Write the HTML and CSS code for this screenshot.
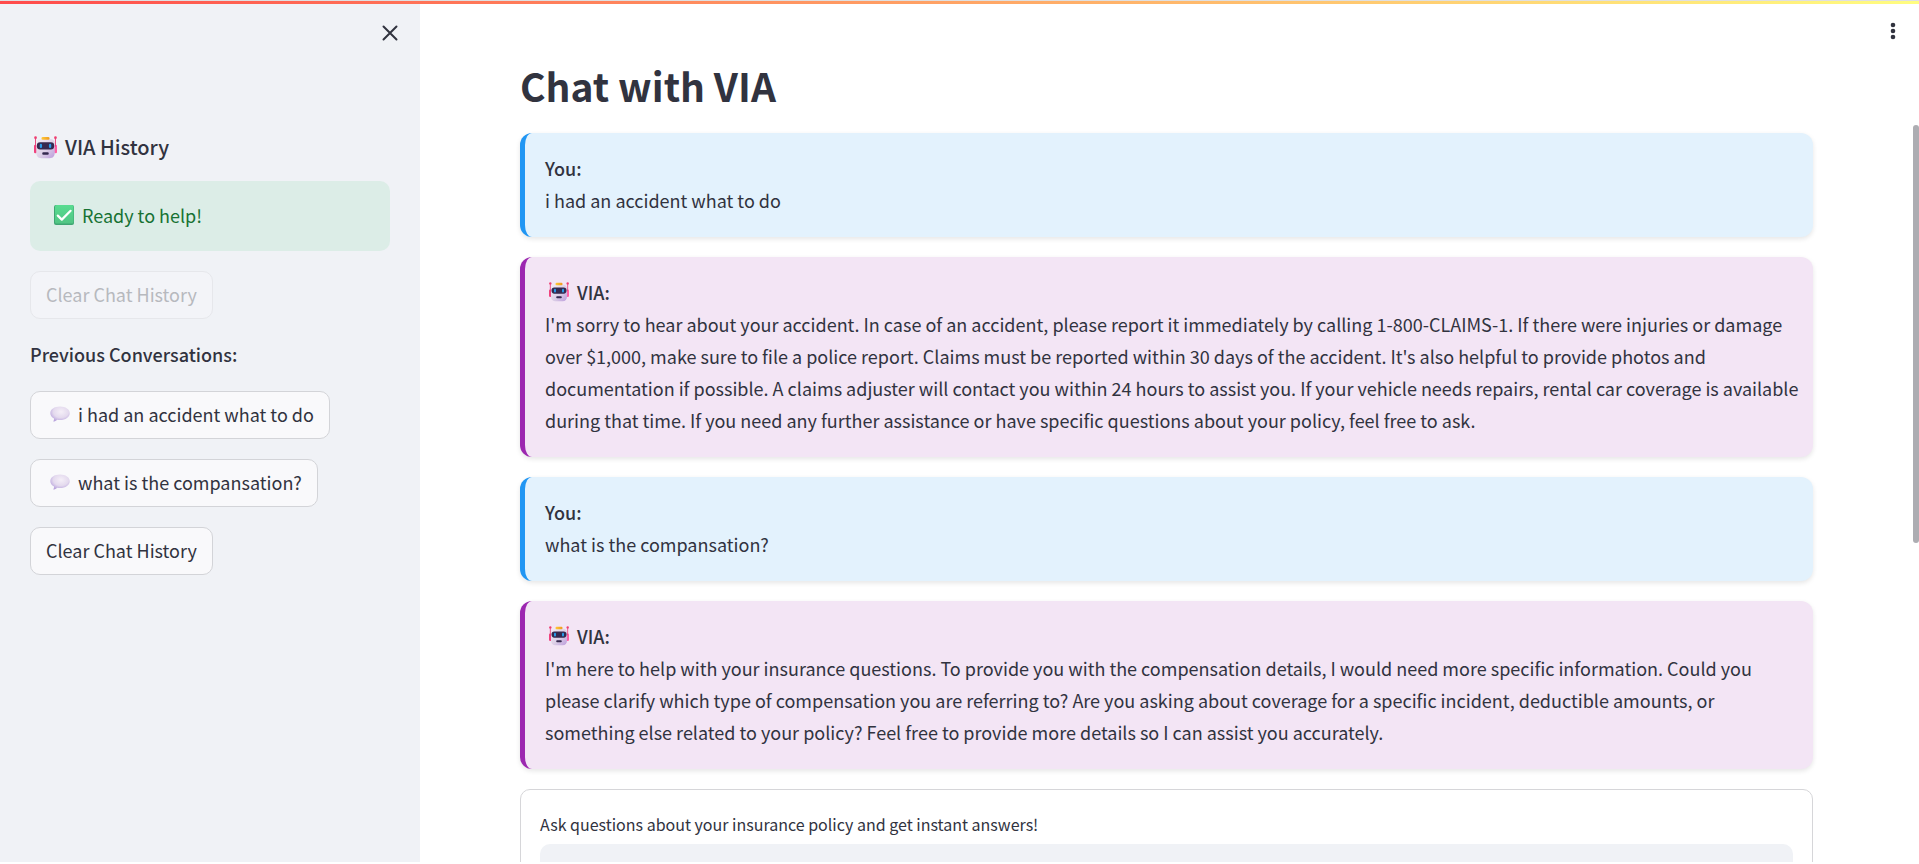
FILE: index.html
```html
<!DOCTYPE html>
<html lang="en">
<head>
<meta charset="utf-8">
<title>Chat with VIA</title>
<link rel="stylesheet" href="styles.css">
</head>
<body>
<svg class="defs" aria-hidden="true">
  <defs>
    <linearGradient id="face" x1="0" y1="0" x2="1" y2="1">
      <stop offset="0" stop-color="#f4edf6"/><stop offset=".55" stop-color="#dccfe6"/><stop offset="1" stop-color="#bb9bdc"/>
    </linearGradient>
    <linearGradient id="gold" x1="0" x2="1"><stop offset="0" stop-color="#ffc93a"/><stop offset="1" stop-color="#ef9a1e"/></linearGradient>
    <linearGradient id="green" x1="0" y1="0" x2="0" y2="1"><stop offset="0" stop-color="#58dc90"/><stop offset="1" stop-color="#51c584"/></linearGradient>
    <radialGradient id="bubble" cx=".55" cy=".35" r=".65">
      <stop offset="0" stop-color="#f5eff8"/><stop offset=".6" stop-color="#e4daee"/><stop offset="1" stop-color="#b9a4dd"/>
    </radialGradient>
    <symbol id="robot" viewBox="0 0 24 24">
      <rect x="0" y="9" width="3" height="9" rx="1.4" fill="#f0427e"/>
      <rect x="21" y="9" width="3" height="9" rx="1.4" fill="#ff5fa5"/>
      <path d="M1.6 2v9M22.4 2v9" stroke="#ea3f78" stroke-width="1"/>
      <circle cx="1.6" cy="1.7" r="1.4" fill="#ee3f72"/><circle cx="22.4" cy="1.7" r="1.4" fill="#ee3f72"/>
      <path d="M7 3.2h10c3 0 4.6 2 4.6 5v9.300c0 3.600-2 5.700-5.200 5.700H7.600c-3.200 0-5.200-2.100-5.200-5.700V8.200C2.400 5.200 4 3.200 7 3.200z" fill="url(#face)"/>
      <rect x="7.800" y="1" width="8.400" height="3" rx="1.300" fill="url(#gold)"/>
      <rect x="3" y="6.600" width="18" height="7.400" rx="3.400" fill="#35294f"/>
      <rect x="6" y="8.200" width="2.400" height="4.400" rx="1.200" fill="#2a9be8"/>
      <rect x="15.600" y="8.200" width="2.400" height="4.400" rx="1.200" fill="#2a9be8"/>
      <rect x="8.600" y="17" width="6.800" height="2.600" rx="1.200" fill="#35294f"/>
    </symbol>
    <symbol id="check" viewBox="0 0 20 20">
      <rect width="20" height="20" rx="2" fill="#3fa673"/>
      <rect x="1" width="18.500" height="18.500" rx="1.600" fill="url(#green)"/>
      <path d="M3.800 10.600l4 4 8.800-8.800" fill="none" stroke="#fff" stroke-width="2.200" stroke-linecap="round" stroke-linejoin="round"/>
    </symbol>
    <symbol id="speech" viewBox="0 0 20 16">
      <path d="M10 .5c5.600 0 9.700 2.800 9.700 6.700S15.600 14 10 14c-1 0-2 0-2.900-.3-.9 1-2.200 1.800-3.900 1.900.7-.9 1-1.900.8-3C1.700 11.300.3 9.400.3 7.200.3 3.300 4.400.5 10 .5z" fill="url(#bubble)"/>
    </symbol>
  </defs>
</svg>

<div class="decoration"></div>
<div class="app">
  <aside class="sidebar">
    <div class="sidebar-top">
      <button class="icon-button" type="button" aria-label="Close sidebar">
        <svg width="16" height="16" viewBox="0 0 16 16"><path d="M1.500 1.500l13 13M14.500 1.500l-13 13" stroke="currentColor" stroke-width="2" stroke-linecap="round"/></svg>
      </button>
    </div>
    <div class="sidebar-content">
      <h2 class="sidebar-title"><svg class="robot robot-large"><use href="#robot"/></svg>VIA History</h2>
      <div class="success" role="status"><svg class="check"><use href="#check"/></svg>Ready to help!</div>
      <button class="button" type="button" disabled>Clear Chat History</button>
      <h3 class="subhead">Previous Conversations:</h3>
      <button class="button" type="button"><svg class="speech"><use href="#speech"/></svg>i had an accident what to do</button>
      <button class="button" type="button"><svg class="speech"><use href="#speech"/></svg>what is the compansation?</button>
      <button class="button" type="button">Clear Chat History</button>
    </div>
  </aside>

  <main class="main">
    <button class="icon-button menu-button" type="button" aria-label="Main menu">
      <svg width="6" height="18" viewBox="0 0 6 18" fill="currentColor"><circle cx="3" cy="3" r="2.300"/><circle cx="3" cy="9" r="2.300"/><circle cx="3" cy="15" r="2.300"/></svg>
    </button>
    <div class="chat">
      <h1 class="title">Chat with VIA</h1>
      <article class="message user">
        <strong class="author">You:</strong>
        <p class="text">i had an accident what to do</p>
      </article>
      <article class="message bot">
        <strong class="author"><svg class="robot"><use href="#robot"/></svg>VIA:</strong>
        <p class="text">I'm sorry to hear about your accident. In case of an accident, please report it immediately by calling 1-800-CLAIMS-1. If there were injuries or damage over $1,000, make sure to file a police report. Claims must be reported within 30 days of the accident. It's also helpful to provide photos and documentation if possible. A claims adjuster will contact you within 24 hours to assist you. If your vehicle needs repairs, rental car coverage is available during that time. If you need any further assistance or have specific questions about your policy, feel free to ask.</p>
      </article>
      <article class="message user">
        <strong class="author">You:</strong>
        <p class="text">what is the compansation?</p>
      </article>
      <article class="message bot">
        <strong class="author"><svg class="robot"><use href="#robot"/></svg>VIA:</strong>
        <p class="text">I'm here to help with your insurance questions. To provide you with the compensation details, I would need more specific information. Could you please clarify which type of compensation you are referring to? Are you asking about coverage for a specific incident, deductible amounts, or something else related to your policy? Feel free to provide more details so I can assist you accurately.</p>
      </article>
      <form class="ask">
        <label class="ask-label" for="question">Ask questions about your insurance policy and get instant answers!</label>
        <input class="ask-input" id="question" type="text">
      </form>
    </div>
    <div class="scroll-thumb"></div>
  </main>
</div>
</body>
</html>
```
FILE: styles.css
```css
* {
  box-sizing: border-box;
}

body {
  margin: 0;
  height: 100vh;
  padding-bottom: 2px;
  overflow: hidden;
  background: #fff;
  color: #31333f;
  font-family: "Noto Sans CJK SC", "Noto Sans", sans-serif;
  font-size: 18px;
  line-height: 32px;
}

h1, h2, h3, p {
  margin: 0;
}

.defs {
  position: absolute;
  width: 0;
  height: 0;
}

.decoration {
  position: absolute;
  z-index: 1;
  top: 0;
  left: 0;
  right: 0;
  height: 4px;
  border-top: 1px solid #dfe0e2;
  background: linear-gradient(90deg, #ff4b4b, #fffd80);
}

.app {
  display: flex;
  height: 100%;
}

.sidebar {
  flex: 0 0 420px;
  background: #f0f2f6;
}

.sidebar-top {
  display: flex;
  justify-content: flex-end;
  padding: 17px 14px 0;
}

.icon-button {
  display: flex;
  align-items: center;
  justify-content: center;
  width: 32px;
  height: 32px;
  padding: 0;
  border: 0;
  background: none;
  color: #31333f;
}

.sidebar-content {
  display: flex;
  flex-direction: column;
  align-items: flex-start;
  gap: 20px;
  padding: 84px 30px 0;
}

.sidebar-title {
  display: flex;
  align-items: center;
  font-size: 20px;
  font-weight: 500;
  line-height: 28px;
}

.robot {
  width: 20px;
  height: 20px;
  margin: 0 8px 0 4px;
}

.robot-large {
  width: 23px;
  height: 23px;
}

.success {
  display: flex;
  align-items: center;
  align-self: stretch;
  height: 70px;
  padding: 0 24px 2px;
  border-radius: 10px;
  background: #dcede7;
  color: #177233;
}

.check {
  width: 20px;
  height: 20px;
  margin-right: 8px;
}

.button {
  display: flex;
  align-items: center;
  height: 48px;
  padding: 0 15px 2px;
  border: 1px solid #d3d4d8;
  border-radius: 10px;
  background: #f9f9fb;
  color: inherit;
  font: inherit;
}

.button:disabled {
  border-color: #e6e7eb;
  background: #f3f4f8;
  color: #b7b9be;
}

.speech {
  width: 20px;
  height: 16px;
  margin: 0 8px 0 4px;
}

.subhead {
  padding-bottom: 2px;
  font-size: 18px;
  font-weight: 500;
  line-height: 30px;
}

.main {
  position: relative;
  flex: 1;
  min-width: 0;
  overflow: hidden;
}

.menu-button {
  position: absolute;
  top: 15px;
  right: 10px;
}

.chat {
  display: flex;
  flex-direction: column;
  gap: 20px;
  padding: 59px 106px 0 100px;
}

.title {
  padding-bottom: 2px;
  font-size: 39px;
  font-weight: 700;
  line-height: 52px;
}

.message {
  padding: 19px 12px 21px 20px;
  border-left: 5px solid;
  border-radius: 12px;
  box-shadow: 0 2px 5px rgba(0, 0, 0, 0.1);
}

.user {
  border-color: #2196f3;
  background: #e3f2fd;
}

.bot {
  border-color: #9c27b0;
  background: #f3e5f5;
}

.author {
  display: flex;
  align-items: center;
  font-weight: 500;
}

.ask {
  display: flex;
  flex-direction: column;
  padding: 18px 19px 20px;
  border: 1px solid #d6d6d9;
  border-radius: 10px;
}

.ask-label {
  padding-bottom: 4px;
  font-size: 16px;
}

.ask-input {
  height: 50px;
  padding: 0 15px;
  border: 0;
  border-radius: 10px;
  background: #f0f2f6;
  color: inherit;
  font: inherit;
}

.scroll-thumb {
  position: absolute;
  top: 125px;
  right: 0;
  width: 6px;
  height: 418px;
  border-radius: 3px;
  background: #adadb2;
}
```
